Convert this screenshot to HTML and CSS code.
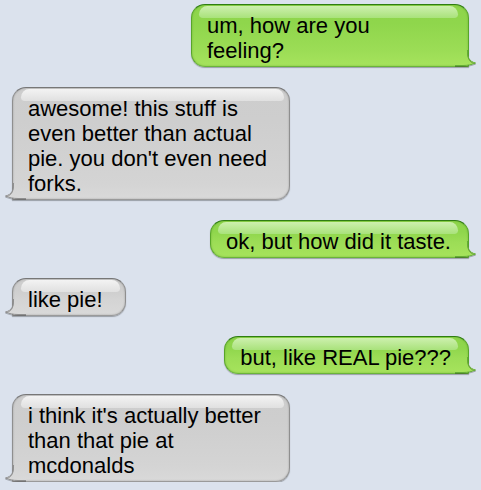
FILE: index.html
```html
<!DOCTYPE html>
<html>
<head>
<meta charset="utf-8">
<link rel="stylesheet" href="styles.css">
</head>
<body>
<div class="thread">
  <div class="msg sent">
    <div class="bubble wide"><span class="text">um, how are you<br>feeling?</span><svg class="tail" width="22" height="16" viewBox="0 0 22 16"><defs><linearGradient id="g1" x1="0" y1="0" x2="0" y2="1"><stop offset="0" stop-color="#9cdd56"/><stop offset="1" stop-color="#a6e35c"/></linearGradient></defs><path d="M0,0 H12.5 C12.5,6 14,10.5 20.5,12 C17,13.6 13,14.5 8,14.5 H0 Z" fill="url(#g1)"/><path d="M12.5,1 C12.5,7 14,11.5 20.5,13 C17,14.6 13,15.5 8,15.5 H0" fill="none" stroke="rgba(0,0,0,0.28)"/><path d="M12.5,-1 V0 C12.5,6 14,10.5 20.5,12 C17,13.6 13,14.5 8,14.5 H0" fill="none" stroke="#64ad35"/></svg></div>
  </div>
  <div class="msg recv">
    <div class="bubble wide"><span class="text">awesome! this stuff is<br>even better than actual<br>pie. you don't even need<br>forks.</span><svg class="tail" width="22" height="16" viewBox="0 0 22 16"><defs><linearGradient id="g2" x1="0" y1="0" x2="0" y2="1"><stop offset="0" stop-color="#d4d4d4"/><stop offset="1" stop-color="#d9d9d9"/></linearGradient></defs><path d="M0,0 H12.5 C12.5,6 14,10.5 20.5,12 C17,13.6 13,14.5 8,14.5 H0 Z" fill="url(#g2)"/><path d="M12.5,1 C12.5,7 14,11.5 20.5,13 C17,14.6 13,15.5 8,15.5 H0" fill="none" stroke="rgba(0,0,0,0.25)"/><path d="M12.5,-1 V0 C12.5,6 14,10.5 20.5,12 C17,13.6 13,14.5 8,14.5 H0" fill="none" stroke="#8f8f8f"/></svg></div>
  </div>
  <div class="msg sent">
    <div class="bubble"><span class="text">ok, but how did it taste.</span><svg class="tail" width="22" height="16" viewBox="0 0 22 16"><path d="M0,0 H12.5 C12.5,6 14,10.5 20.5,12 C17,13.6 13,14.5 8,14.5 H0 Z" fill="url(#g1)"/><path d="M12.5,1 C12.5,7 14,11.5 20.5,13 C17,14.6 13,15.5 8,15.5 H0" fill="none" stroke="rgba(0,0,0,0.28)"/><path d="M12.5,-1 V0 C12.5,6 14,10.5 20.5,12 C17,13.6 13,14.5 8,14.5 H0" fill="none" stroke="#64ad35"/></svg></div>
  </div>
  <div class="msg recv">
    <div class="bubble"><span class="text">like pie!</span><svg class="tail" width="22" height="16" viewBox="0 0 22 16"><path d="M0,0 H12.5 C12.5,6 14,10.5 20.5,12 C17,13.6 13,14.5 8,14.5 H0 Z" fill="url(#g2)"/><path d="M12.5,1 C12.5,7 14,11.5 20.5,13 C17,14.6 13,15.5 8,15.5 H0" fill="none" stroke="rgba(0,0,0,0.25)"/><path d="M12.5,-1 V0 C12.5,6 14,10.5 20.5,12 C17,13.6 13,14.5 8,14.5 H0" fill="none" stroke="#8f8f8f"/></svg></div>
  </div>
  <div class="msg sent">
    <div class="bubble"><span class="text">but, like REAL pie???</span><svg class="tail" width="22" height="16" viewBox="0 0 22 16"><path d="M0,0 H12.5 C12.5,6 14,10.5 20.5,12 C17,13.6 13,14.5 8,14.5 H0 Z" fill="url(#g1)"/><path d="M12.5,1 C12.5,7 14,11.5 20.5,13 C17,14.6 13,15.5 8,15.5 H0" fill="none" stroke="rgba(0,0,0,0.28)"/><path d="M12.5,-1 V0 C12.5,6 14,10.5 20.5,12 C17,13.6 13,14.5 8,14.5 H0" fill="none" stroke="#64ad35"/></svg></div>
  </div>
  <div class="msg recv">
    <div class="bubble wide"><span class="text">i think it's actually better<br>than that pie at<br>mcdonalds</span><svg class="tail" width="22" height="16" viewBox="0 0 22 16"><path d="M0,0 H12.5 C12.5,6 14,10.5 20.5,12 C17,13.6 13,14.5 8,14.5 H0 Z" fill="url(#g2)"/><path d="M12.5,1 C12.5,7 14,11.5 20.5,13 C17,14.6 13,15.5 8,15.5 H0" fill="none" stroke="rgba(0,0,0,0.25)"/><path d="M12.5,-1 V0 C12.5,6 14,10.5 20.5,12 C17,13.6 13,14.5 8,14.5 H0" fill="none" stroke="#8f8f8f"/></svg></div>
  </div>
</div>
</body>
</html>
```

FILE: styles.css
```css
html, body {
  margin: 0;
  background: #dbe2ed;
}

body {
  font-family: "Liberation Sans", Arial, Helvetica, sans-serif;
}

.thread {
  display: flex;
  flex-direction: column;
  gap: 20px;
  padding: 4px 12px 0 12px;
}

.msg {
  display: flex;
}

.msg.sent {
  justify-content: flex-end;
}

.msg.recv {
  justify-content: flex-start;
}

.bubble {
  position: relative;
  box-sizing: border-box;
  white-space: nowrap;
  font-size: 22px;
  line-height: 25px;
  color: #000;
  border: 1px solid;
  border-radius: 14px;
  box-shadow: 0 1px 1px rgba(0, 0, 0, 0.3);
}

.bubble .text {
  position: relative;
  z-index: 1;
}

.bubble.wide {
  width: 278px;
}

.bubble::before {
  content: "";
  position: absolute;
  top: 1px;
  height: 12px;
  border-radius: 11px 11px 5px 5px;
}

.sent .bubble {
  padding: 8px 17px 3px 15px;
  border-color: #2f7d12 #58a52a #6ab43a;
  border-bottom-right-radius: 0;
  background: linear-gradient(to top, #a6e35c 0, #9cdd56 15px, #8fd64c 70%, #8ed54a 100%);
  box-shadow: 0 1px 1px rgba(0, 0, 0, 0.3), inset 0 0 2px rgba(40, 100, 10, 0.35);
}

.sent .bubble::before {
  left: 7px;
  right: 10px;
  background: linear-gradient(#cdf0ae, #a9e27b);
}

.recv .bubble {
  padding: 8px 22px 3px 15px;
  border-color: #777 #8f8f8f #9a9a9a;
  border-bottom-left-radius: 0;
  background: linear-gradient(to top, #d9d9d9 0, #d4d4d4 15px, #cecece 70%, #cdcdcd 100%);
  box-shadow: 0 1px 1px rgba(0, 0, 0, 0.3), inset 0 0 2px rgba(0, 0, 0, 0.25);
}

.recv .bubble::before {
  left: 8px;
  right: 5px;
  background: linear-gradient(#f3f3f3, #e0e0e0);
}

.tail {
  position: absolute;
  bottom: -1px;
  overflow: visible;
  z-index: 2;
}

.sent .tail {
  right: -9px;
}

.recv .tail {
  left: -9px;
  transform: scaleX(-1);
}
```
